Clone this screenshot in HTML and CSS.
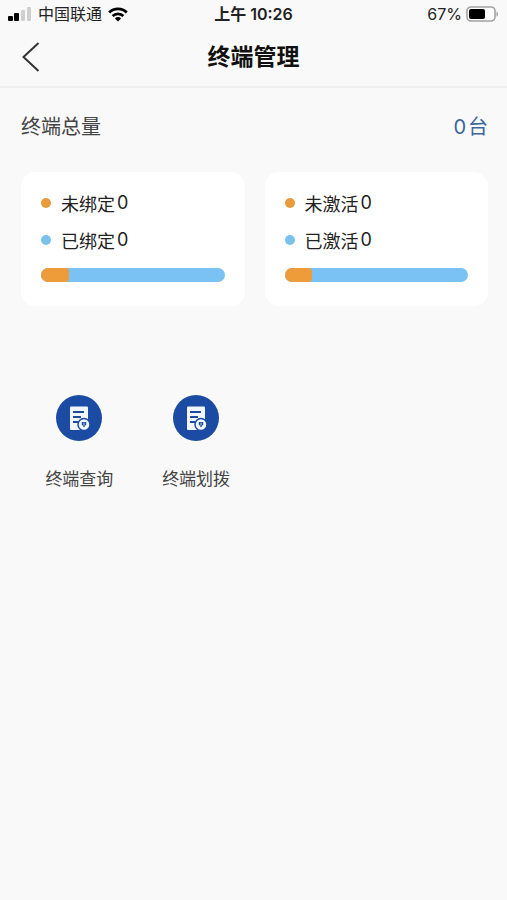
FILE: index.html
```html
<!DOCTYPE html>
<html lang="zh-CN">
<head>
    <meta charset="UTF-8">
    <meta name="viewport" content="width=device-width, initial-scale=1.0">
    <title>终端管理</title>
    <link rel="stylesheet" href="styles.css">
</head>
<body>
    <div class="status-bar">
        <div class="status-left">
            <svg class="signal" width="24" height="14" viewBox="0 0 24 14" aria-hidden="true">
                <rect x="0" y="9" width="5" height="5" rx="1" fill="#000"/>
                <rect x="6" y="6" width="5" height="8" rx="1" fill="#000"/>
                <rect x="13" y="3" width="4" height="11" rx="1" fill="#cfcfcf"/>
                <rect x="19" y="0" width="4" height="14" rx="1" fill="#cfcfcf"/>
            </svg>
            <span>中国联通</span>
            <svg class="wifi" width="20" height="15" viewBox="0 0 20 15" aria-hidden="true">
                <path d="M1.2 5.4a12.6 12.6 0 0 1 17.6 0" fill="none" stroke="#000" stroke-width="2.8"/>
                <path d="M4.6 9a7.8 7.8 0 0 1 10.8 0" fill="none" stroke="#000" stroke-width="2.6"/>
                <path d="M10 14.6L6.9 11.4a4.4 4.4 0 0 1 6.2 0z" fill="#000"/>
            </svg>
        </div>
        <div class="status-time">上午 10:26</div>
        <div class="status-right">
            <span>67%</span>
            <svg width="33" height="16" viewBox="0 0 33 16" aria-hidden="true">
                <rect x="1" y="1" width="28" height="14" rx="4" fill="#fff" stroke="#a2a2a2" stroke-width="1.6"/>
                <rect x="3" y="3" width="16" height="10" rx="2" fill="#000"/>
                <path d="M30.5 5.4c2 .8 2 4.4 0 5.2z" fill="#a2a2a2"/>
            </svg>
        </div>
    </div>

    <header class="header">
        <button class="back" type="button" aria-label="返回">
            <svg width="18" height="30" viewBox="0 0 18 30" aria-hidden="true">
                <path d="M16.5 1L1.5 15l15 14" fill="none" stroke="#333" stroke-width="2"/>
            </svg>
        </button>
        <h1>终端管理</h1>
    </header>

    <main>
        <div class="total">
            <h2>终端总量</h2>
            <div class="total-count"><span class="num">0</span>台</div>
        </div>

        <div class="cards">
            <section class="card">
                <div class="row"><i class="dot orange"></i>未绑定<span class="num">0</span></div>
                <div class="row"><i class="dot blue"></i>已绑定<span class="num">0</span></div>
                <div class="bar"><div class="bar-fill" style="width: 15%"></div></div>
            </section>
            <section class="card">
                <div class="row"><i class="dot orange"></i>未激活<span class="num">0</span></div>
                <div class="row"><i class="dot blue"></i>已激活<span class="num">0</span></div>
                <div class="bar"><div class="bar-fill" style="width: 15%"></div></div>
            </section>
        </div>

        <nav class="menu">
            <a class="menu-item" href="#query">
                <svg width="46" height="46" viewBox="0 0 46 46" aria-hidden="true">
                    <circle cx="23" cy="23" r="23" fill="#1c4ba3"/>
                    <rect x="14" y="11.5" width="18" height="23.5" rx="1" fill="#f1f6fd"/>
                    <path d="M17 17h11M17 22h8M17 27h5" stroke="#1c4ba3" stroke-width="2"/>
                    <circle cx="28" cy="29.5" r="6" fill="#f1f6fd" stroke="#1c4ba3" stroke-width="1.5"/>
                    <path d="M25.8 27h4.4v2.2L28 32.4l-2.2-3.2z" fill="#1c4ba3"/>
                    <path d="M28 27.6v3" stroke="#f1f6fd" stroke-width=".8"/>
                </svg>
                <span>终端查询</span>
            </a>
            <a class="menu-item" href="#transfer">
                <svg width="46" height="46" viewBox="0 0 46 46" aria-hidden="true">
                    <circle cx="23" cy="23" r="23" fill="#1c4ba3"/>
                    <rect x="14" y="11.5" width="18" height="23.5" rx="1" fill="#f1f6fd"/>
                    <path d="M17 17h11M17 22h8M17 27h5" stroke="#1c4ba3" stroke-width="2"/>
                    <circle cx="28" cy="29.5" r="6" fill="#f1f6fd" stroke="#1c4ba3" stroke-width="1.5"/>
                    <path d="M25.8 27h4.4v2.2L28 32.4l-2.2-3.2z" fill="#1c4ba3"/>
                    <path d="M28 27.6v3" stroke="#f1f6fd" stroke-width=".8"/>
                </svg>
                <span>终端划拨</span>
            </a>
        </nav>
    </main>
</body>
</html>
```
FILE: styles.css
```css
* {
    box-sizing: border-box;
}
body {
    margin: 0;
    min-height: 100vh;
    background-color: #f9f9f9;
    font-family: Inter, "Noto Sans CJK SC", sans-serif;
    color: #222;
}
h1,
h2 {
    margin: 0;
}
.status-bar {
    display: grid;
    grid-template-columns: 1fr auto 1fr;
    align-items: center;
    height: 28px;
    padding: 0 8px;
    font-size: 16px;
    line-height: 28px;
}
.status-left,
.status-right {
    display: flex;
    align-items: center;
    gap: 6px;
}
.status-right {
    justify-content: flex-end;
    gap: 4px;
}
.status-time {
    font-weight: 600;
}
.header {
    display: grid;
    grid-template-columns: 38px 1fr 38px;
    align-items: center;
    height: 60px;
    padding: 0 12px;
    border-bottom: 2px solid #f0f0f0;
}
.header h1 {
    font-size: 23px;
    font-weight: 700;
    line-height: 34px;
    text-align: center;
    color: #111;
}
.back {
    display: flex;
    justify-content: center;
    padding: 0;
    border: none;
    background: none;
    cursor: pointer;
}
main {
    padding: 20px 19px 20px 21px;
}
.total {
    display: flex;
    justify-content: space-between;
    align-items: center;
    line-height: 38px;
    font-size: 20px;
}
.total h2 {
    font-size: 20px;
    font-weight: 400;
    color: #444;
}
.total-count {
    color: #3c659f;
}
.num {
    margin: 0 2px;
}
.cards {
    display: grid;
    grid-template-columns: 1fr 1fr;
    gap: 20px;
    margin-top: 26px;
}
.card {
    padding: 12px 20px 24px;
    border-radius: 14px;
    background-color: #fff;
}
.row {
    display: flex;
    align-items: center;
    height: 37px;
    font-size: 18px;
}
.dot {
    width: 10px;
    height: 10px;
    margin-right: 10px;
    border-radius: 50%;
}
.orange {
    background-color: #e99b3c;
}
.blue {
    background-color: #7bc1ee;
}
.bar {
    height: 14px;
    margin-top: 10px;
    border-radius: 7px;
    background-color: #79c2f3;
    overflow: hidden;
}
.bar-fill {
    height: 100%;
    border-radius: 0 4px 4px 0;
    background-color: #ee9b3a;
}
.menu {
    display: grid;
    grid-template-columns: repeat(4, 1fr);
    margin-top: 89px;
}
.menu-item {
    display: flex;
    flex-direction: column;
    align-items: center;
    gap: 26px;
    font-size: 17px;
    line-height: 24px;
    color: #444;
    text-decoration: none;
}
```
